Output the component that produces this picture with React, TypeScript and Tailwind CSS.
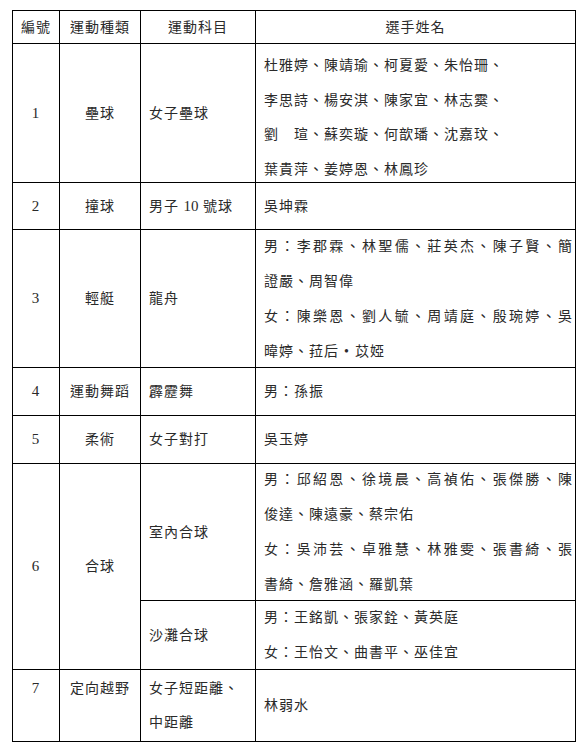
import React from 'react'

// 名單：每一行各自一個字串，j 表示該行要左右對齊（整行填滿）
type Line = { text: React.ReactNode; j?: boolean }

const td = 'border border-black p-0'
const numCell = 'border border-black p-0 text-center align-middle'

function Names({ lines, tight }: { lines: Line[]; tight?: boolean }) {
  const lineCls = tight ? 'h-[34.5px] leading-[34.5px]' : 'h-[35px] leading-[35px]'
  return (
    <div className={tight ? 'pl-[8px] pr-[2px] pt-[5px] -mb-[10px]' : 'pl-[8px] pr-[2px] -my-[4px]'}>
      {lines.map((l, idx) => (
        <div
          key={idx}
          className={
            l.j
              ? lineCls + ' whitespace-nowrap text-justify [text-align-last:justify]'
              : lineCls + ' whitespace-nowrap'
          }
        >
          {l.text}
        </div>
      ))}
    </div>
  )
}

export default function App() {
  return (
    <div className="w-[584px] h-[750px] bg-white pt-[10px] pl-[12px] text-[#2a2a2a] text-[14px] tracking-[1px] font-['Liberation_Serif','Noto_Sans_CJK_TC',serif]">
      <table className="table-fixed border-collapse w-[563px]">
        <colgroup>
          <col className="w-[47px]" />
          <col className="w-[81px]" />
          <col className="w-[115px]" />
          <col className="w-[320px]" />
        </colgroup>
        <tbody>
          {/* ===== 表頭 ===== */}
          <tr className="h-[33px]">
            <td className={numCell}>編號</td>
            <td className={numCell}>運動種類</td>
            <td className={numCell}>運動科目</td>
            <td className={numCell}>選手姓名</td>
          </tr>

          <tr className="h-[139px]">
            <td className={numCell + ' text-[15px]'}>1</td>
            <td className={numCell}>壘球</td>
            <td className={td + ' pl-[8px] align-middle'}>女子壘球</td>
            <td className={td + ' align-top'}>
              <Names
                tight
                lines={[
                  { text: '杜雅婷、陳靖瑜、柯夏愛、朱怡珊、' },
                  { text: '李思詩、楊安淇、陳家宜、林志霙、' },
                  { text: '劉　瑄、蘇奕璇、何歆璠、沈嘉玟、' },
                  { text: '葉貴萍、姜婷恩、林鳳珍' },
                ]}
              />
            </td>
          </tr>

          <tr className="h-[47px]">
            <td className={numCell + ' text-[15px]'}>2</td>
            <td className={numCell}>撞球</td>
            <td className={td + ' pl-[8px] align-middle'}>
              男子 <span className="text-[15px] tracking-normal">10</span> 號球
            </td>
            <td className={td + ' pl-[8px] align-middle'}>吳坤霖</td>
          </tr>

          <tr className="h-[138px]">
            <td className={numCell + ' text-[15px]'}>3</td>
            <td className={numCell}>輕艇</td>
            <td className={td + ' pl-[8px] align-middle'}>龍舟</td>
            <td className={td + ' align-middle'}>
              <Names
                lines={[
                  { text: '男：李郡霖、林聖儒、莊英杰、陳子賢、簡', j: true },
                  { text: '證嚴、周智偉' },
                  { text: '女：陳樂恩、劉人毓、周靖庭、殷琬婷、吳', j: true },
                  {
                    text: (
                      <>
                        暐婷、菈后<span className="inline-block w-[16px] text-center">•</span>苡婭
                      </>
                    ),
                  },
                ]}
              />
            </td>
          </tr>

          <tr className="h-[48px]">
            <td className={numCell + ' text-[15px]'}>4</td>
            <td className={numCell}>運動舞蹈</td>
            <td className={td + ' pl-[8px] align-middle'}>霹靂舞</td>
            <td className={td + ' pl-[8px] align-middle'}>男：孫振</td>
          </tr>

          <tr className="h-[48px]">
            <td className={numCell + ' text-[15px]'}>5</td>
            <td className={numCell}>柔術</td>
            <td className={td + ' pl-[8px] align-middle'}>女子對打</td>
            <td className={td + ' pl-[8px] align-middle'}>吳玉婷</td>
          </tr>

          <tr className="h-[137px]">
            <td rowSpan={2} className={numCell + ' text-[15px]'}>6</td>
            <td rowSpan={2} className={numCell}>合球</td>
            <td className={td + ' pl-[8px] align-middle'}>室內合球</td>
            <td className={td + ' align-middle'}>
              <Names
                lines={[
                  { text: '男：邱紹恩、徐境晨、高禎佑、張傑勝、陳', j: true },
                  { text: '俊達、陳遠豪、蔡宗佑' },
                  { text: '女：吳沛芸、卓雅慧、林雅雯、張書綺、張', j: true },
                  { text: '書綺、詹雅涵、羅凱葉' },
                ]}
              />
            </td>
          </tr>
          <tr className="h-[69px]">
            <td className={td + ' pl-[8px] align-middle'}>沙灘合球</td>
            <td className={td + ' align-middle'}>
              <Names
                lines={[
                  { text: '男：王銘凱、張家銓、黃英庭' },
                  { text: '女：王怡文、曲書平、巫佳宜' },
                ]}
              />
            </td>
          </tr>

          <tr className="h-[72px]">
            <td className={numCell + ' !align-top text-[15px]'}>
              <div className="pt-[1px] leading-[34px]">7</div>
            </td>
            <td className={numCell + ' !align-top'}>
              <div className="pt-[2px] leading-[34px]">定向越野</div>
            </td>
            <td className={td + ' align-top'}>
              <div className="pl-[8px] pt-[2px]">
                <div className="leading-[34px]">女子短距離、</div>
                <div className="leading-[34px]">中距離</div>
              </div>
            </td>
            <td className={td + ' pl-[8px] align-middle'}>林弱水</td>
          </tr>
        </tbody>
      </table>
    </div>
  )
}
